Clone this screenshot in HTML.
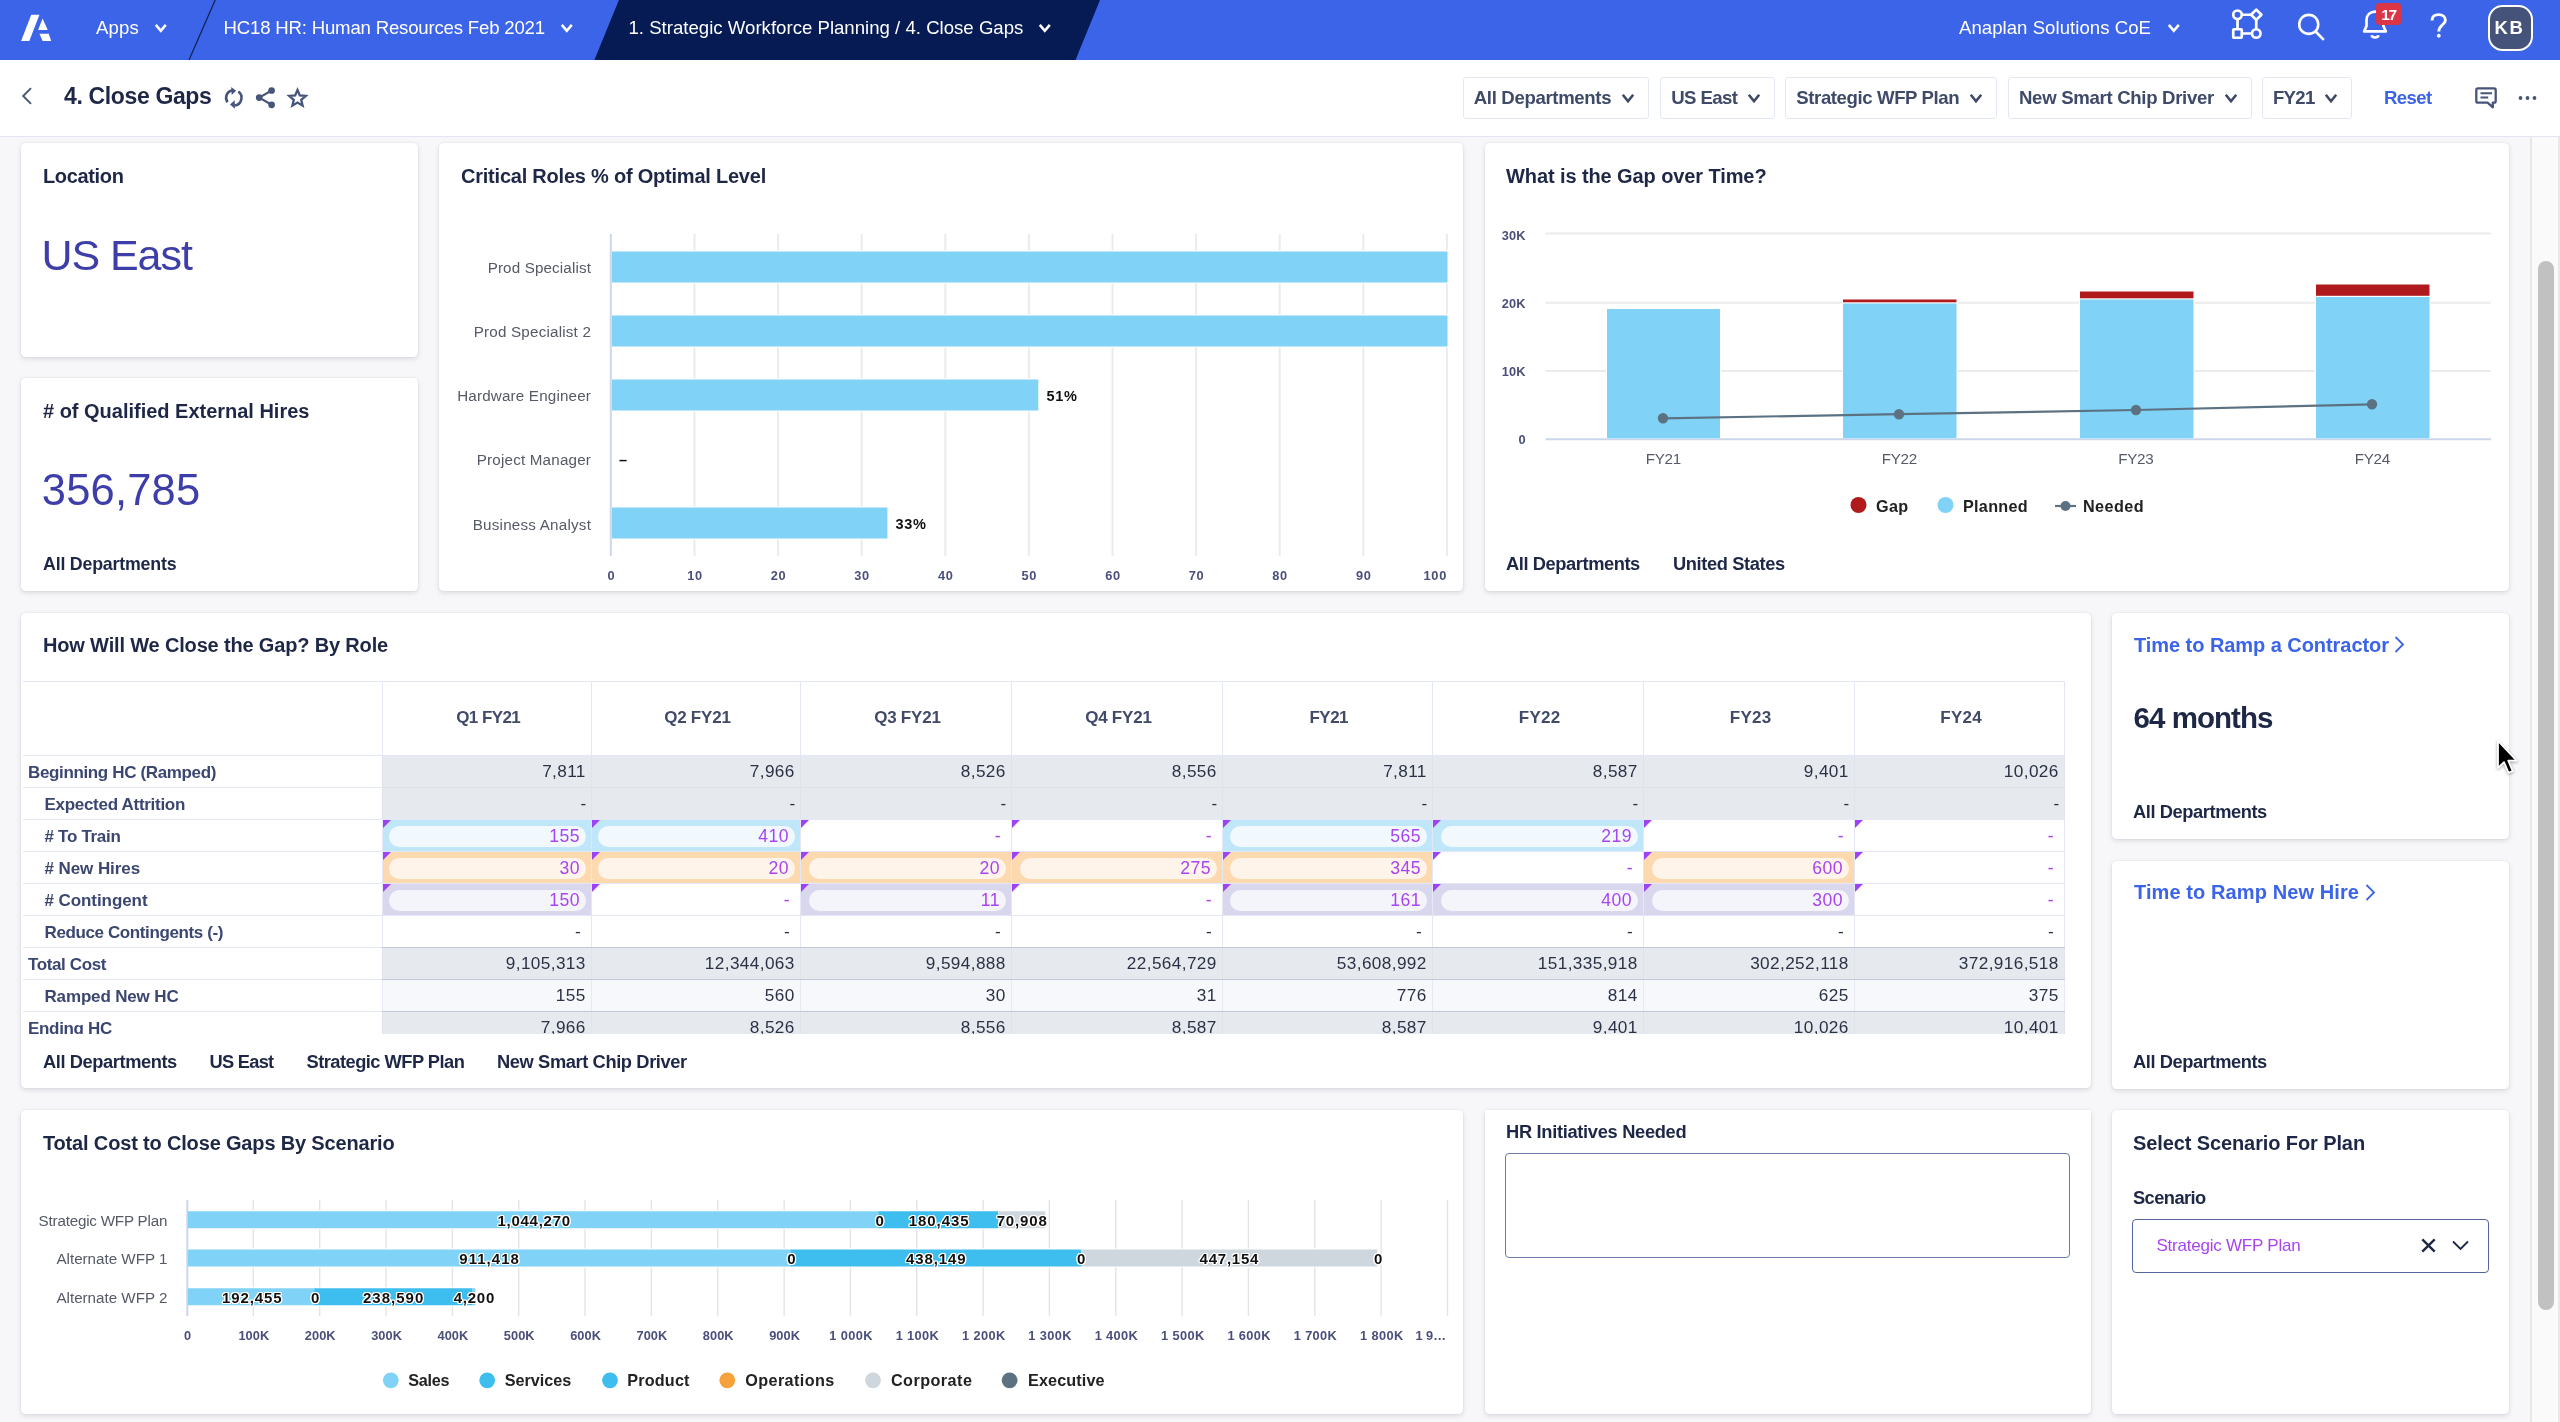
<!DOCTYPE html>
<html><head><meta charset="utf-8"><title>4. Close Gaps</title>
<style>
*{box-sizing:border-box;margin:0;padding:0}
html,body{width:2560px;height:1422px;overflow:hidden;background:#f7f7f9;font-family:"Liberation Sans",sans-serif;}
.a{position:absolute}
.t{position:absolute;white-space:nowrap}
.card{position:absolute;background:#fff;border-radius:4.5px;box-shadow:0 2px 5px rgba(30,40,80,.13),0 0 1.5px rgba(30,40,80,.14)}
svg{position:absolute;overflow:visible}
#wrap{position:absolute;left:0;top:0;width:2560px;height:1422px;will-change:transform}
</style></head><body><div id="wrap">

<div class="a" style="left:0px;top:0px;width:2560px;height:60px;background:#3c64e8;"></div>
<svg class="a" style="left:0;top:0" width="2560" height="60"><polygon points="618.9,0 1100,0 1075.5,60 594.4,60" fill="#061b53"/><line x1="215.2" y1="0" x2="189" y2="60" stroke="#10204f" stroke-width="1.2"/></svg>
<svg class="a" style="left:21px;top:15px" width="31" height="26" viewBox="0 0 31 26"><polygon points="10.25,-0.15 18.45,-0.15 8.3,25.9 0.1,25.9" fill="#fff"/><polygon points="21.6,3.6 26.7,15.1 17.1,15.1" fill="#fff"/><polygon points="18.45,18.75 27.8,18.75 30.2,25.9 21.6,25.9" fill="#fff"/></svg>
<div class="t" style="left:96.00px;top:17.00px;font-size:18.6px;line-height:21px;color:#fff;letter-spacing:0.151px;">Apps</div>
<svg class="a" style="left:155px;top:24px" width="11.6" height="7.8" viewBox="0 0 11.6 7.8"><path d="M0.8 0.8 L5.8 6.8 L10.799999999999999 0.8" fill="none" stroke="#fff" stroke-width="2.6" stroke-linecap="butt" stroke-linejoin="miter"/></svg>
<div class="t" style="left:223.50px;top:17.00px;font-size:18.6px;line-height:21px;color:#fff;letter-spacing:-0.188px;">HC18 HR: Human Resources Feb 2021</div>
<svg class="a" style="left:561px;top:24px" width="11.6" height="7.8" viewBox="0 0 11.6 7.8"><path d="M0.8 0.8 L5.8 6.8 L10.799999999999999 0.8" fill="none" stroke="#fff" stroke-width="2.6" stroke-linecap="butt" stroke-linejoin="miter"/></svg>
<div class="t" style="left:628.50px;top:17.00px;font-size:18.6px;line-height:21px;color:#fff;letter-spacing:0.009px;">1. Strategic Workforce Planning / 4. Close Gaps</div>
<svg class="a" style="left:1039px;top:24px" width="11.6" height="7.8" viewBox="0 0 11.6 7.8"><path d="M0.8 0.8 L5.8 6.8 L10.799999999999999 0.8" fill="none" stroke="#fff" stroke-width="2.6" stroke-linecap="butt" stroke-linejoin="miter"/></svg>
<div class="t" style="left:1959.00px;top:17.00px;font-size:18.6px;line-height:21px;color:#fff;letter-spacing:0.034px;">Anaplan Solutions CoE</div>
<svg class="a" style="left:2167.5px;top:24px" width="11.6" height="7.8" viewBox="0 0 11.6 7.8"><path d="M0.8 0.8 L5.8 6.8 L10.799999999999999 0.8" fill="none" stroke="#fff" stroke-width="2.6" stroke-linecap="butt" stroke-linejoin="miter"/></svg>
<svg class="a" style="left:2231px;top:8px" width="32" height="32" viewBox="0 0 32 32" fill="none" stroke="#fff" stroke-width="2.7"><circle cx="6.5" cy="6.75" r="4.25"/><rect x="2.25" y="21.25" width="8.5" height="8.5" rx="0.8"/><circle cx="25.25" cy="25.5" r="4.25"/><path d="M25.25 1.6 L30.4 6.75 L25.25 11.9 L20.1 6.75 Z" stroke-linejoin="round"/><path d="M10.8 6.75 H20.2 M6.5 11 V21.2 M10.8 25.5 H21 M25.25 11.9 V21.2"/></svg>
<svg class="a" style="left:2297px;top:13px" width="28" height="28" viewBox="0 0 28 28" fill="none" stroke="#fff" stroke-width="2.6"><circle cx="11.75" cy="11.4" r="9.5"/><path d="M18.6 18.5 L26.8 26.9" stroke-linecap="butt"/></svg>
<svg class="a" style="left:2361px;top:9px" width="28" height="32" viewBox="0 0 28 32" fill="none" stroke="#fff" stroke-width="2.7"><path d="M3.2 22.4 L5.5 17 V10.8 C5.5 5.8 9.2 2.7 14 2.7 C18.8 2.7 22.4 5.8 22.4 10.8 V17 L24.8 22.4 Z" stroke-linejoin="round"/><path d="M10.6 26.3 C11.3 29.2 16.8 29.2 17.5 26.3"/></svg>
<div class="a" style="left:2376px;top:3px;width:25px;height:22px;background:#dc3545;border-radius:3.5px"></div>
<div class="t" style="left:2381.30px;top:6.30px;font-size:15.5px;line-height:17px;color:#fff;font-weight:700;letter-spacing:-1.320px;">17</div>
<svg class="a" style="left:2429px;top:12px" width="20" height="28" viewBox="0 0 20 28" fill="none" stroke="#fff" stroke-width="2.9"><path d="M3 8.4 C3 4.4 6 2.6 9.6 2.6 C13.4 2.6 16.4 4.8 16.4 8.2 C16.4 12.8 9.8 13 9.8 19.6"/><circle cx="9.8" cy="23.7" r="1.5" fill="#fff" stroke-width="1"/></svg>
<div class="a" style="left:2487.5px;top:5px;width:45.5px;height:45.5px;background:#45537a;border:2.6px solid #fff;border-radius:14.5px"></div>
<div class="t" style="left:2494.62px;top:16.50px;font-size:18.5px;line-height:21px;color:#fff;font-weight:700;letter-spacing:1.640px;">KB</div>
<div class="a" style="left:0px;top:60px;width:2560px;height:76px;background:#fff;"></div>
<div class="a" style="left:0px;top:136px;width:2560px;height:1px;background:#e1e5f5;"></div>
<svg class="a" style="left:21px;top:87px" width="12" height="18" viewBox="0 0 12 18"><path d="M10 1.2 L2.2 9 L10 16.8" fill="none" stroke="#48557a" stroke-width="1.9"/></svg>
<div class="t" style="left:64.00px;top:83.30px;font-size:23px;line-height:26px;color:#1e2846;font-weight:700;letter-spacing:-0.355px;">4. Close Gaps</div>
<svg class="a" style="left:0;top:0" width="400" height="136"><path d="M227.49 102.22 A7.7 7.7 0 0 1 232.46 90.22 M238.33 91.57 A7.7 7.7 0 0 1 234.47 105.47" fill="none" stroke="#48557a" stroke-width="2.6"/><polygon points="231.2,86.9 236.1,90.8 231.7,95.1" fill="#48557a"/><polygon points="234.7,100.3 230,104.6 234.9,108.7" fill="#48557a"/><line x1="259.2" y1="97.6" x2="271.6" y2="90.5" stroke="#48557a" stroke-width="2.2"/><line x1="259.2" y1="97.6" x2="271.6" y2="104.8" stroke="#48557a" stroke-width="2.2"/><circle cx="271.6" cy="90.5" r="3.35" fill="#48557a"/><circle cx="259.2" cy="97.6" r="3.35" fill="#48557a"/><circle cx="271.6" cy="104.8" r="3.35" fill="#48557a"/><polygon points="297.50,89.90 299.79,95.44 305.77,95.91 301.21,99.81 302.61,105.64 297.50,102.50 292.39,105.64 293.79,99.81 289.23,95.91 295.21,95.44" fill="none" stroke="#48557a" stroke-width="2.3" stroke-linejoin="miter"/></svg>
<div class="a" style="left:1463px;top:77px;width:185.75px;height:41.75px;background:#fff;border:1.5px solid #e4e8f4;border-radius:3px"></div><div class="t" style="left:1473.75px;top:87.00px;font-size:18.6px;line-height:21px;color:#3e4a68;font-weight:700;letter-spacing:-0.342px;">All Departments</div><svg class="a" style="left:1621.75px;top:93.75px" width="12" height="8.25" viewBox="0 0 12 8.25"><path d="M0.8 0.8 L6.0 7.25 L11.2 0.8" fill="none" stroke="#3e4a68" stroke-width="2.6" stroke-linecap="butt" stroke-linejoin="miter"/></svg>
<div class="a" style="left:1660px;top:77px;width:115px;height:41.75px;background:#fff;border:1.5px solid #e4e8f4;border-radius:3px"></div><div class="t" style="left:1671.25px;top:87.00px;font-size:18.6px;line-height:21px;color:#3e4a68;font-weight:700;letter-spacing:-0.578px;">US East</div><svg class="a" style="left:1748px;top:93.75px" width="12" height="8.25" viewBox="0 0 12 8.25"><path d="M0.8 0.8 L6.0 7.25 L11.2 0.8" fill="none" stroke="#3e4a68" stroke-width="2.6" stroke-linecap="butt" stroke-linejoin="miter"/></svg>
<div class="a" style="left:1785px;top:77px;width:211.75px;height:41.75px;background:#fff;border:1.5px solid #e4e8f4;border-radius:3px"></div><div class="t" style="left:1796.25px;top:87.00px;font-size:18.6px;line-height:21px;color:#3e4a68;font-weight:700;letter-spacing:-0.400px;">Strategic WFP Plan</div><svg class="a" style="left:1969.75px;top:93.75px" width="12" height="8.25" viewBox="0 0 12 8.25"><path d="M0.8 0.8 L6.0 7.25 L11.2 0.8" fill="none" stroke="#3e4a68" stroke-width="2.6" stroke-linecap="butt" stroke-linejoin="miter"/></svg>
<div class="a" style="left:2008px;top:77px;width:243.75px;height:41.75px;background:#fff;border:1.5px solid #e4e8f4;border-radius:3px"></div><div class="t" style="left:2019.00px;top:87.00px;font-size:18.6px;line-height:21px;color:#3e4a68;font-weight:700;letter-spacing:-0.312px;">New Smart Chip Driver</div><svg class="a" style="left:2224.75px;top:93.75px" width="12" height="8.25" viewBox="0 0 12 8.25"><path d="M0.8 0.8 L6.0 7.25 L11.2 0.8" fill="none" stroke="#3e4a68" stroke-width="2.6" stroke-linecap="butt" stroke-linejoin="miter"/></svg>
<div class="a" style="left:2262px;top:77px;width:89.75px;height:41.75px;background:#fff;border:1.5px solid #e4e8f4;border-radius:3px"></div><div class="t" style="left:2273.00px;top:87.00px;font-size:18.6px;line-height:21px;color:#3e4a68;font-weight:700;letter-spacing:-0.739px;">FY21</div><svg class="a" style="left:2324.75px;top:93.75px" width="12" height="8.25" viewBox="0 0 12 8.25"><path d="M0.8 0.8 L6.0 7.25 L11.2 0.8" fill="none" stroke="#3e4a68" stroke-width="2.6" stroke-linecap="butt" stroke-linejoin="miter"/></svg>
<div class="t" style="left:2384.00px;top:87.00px;font-size:18.6px;line-height:21px;color:#3c64e8;font-weight:700;letter-spacing:-0.632px;">Reset</div>
<svg class="a" style="left:2475px;top:87px" width="22" height="22" viewBox="0 0 22 22" fill="none" stroke="#48557a" stroke-width="2.3"><path d="M3 1.3 H19 Q20.7 1.3 20.7 3 V14 Q20.7 15.7 19 15.7 H17.8 V20.3 L12.6 15.7 H3 Q1.3 15.7 1.3 14 V3 Q1.3 1.3 3 1.3 Z" stroke-linejoin="round"/><path d="M5.5 6.3 H17 M5.5 10.6 H13.2" stroke-width="2"/></svg>
<svg class="a" style="left:2518px;top:95px" width="20" height="6"><circle cx="2.500" cy="3" r="1.900" fill="#48557a"/><circle cx="9.500" cy="3" r="1.900" fill="#48557a"/><circle cx="16.500" cy="3" r="1.900" fill="#48557a"/></svg>
<div class="a" style="left:2530px;top:137px;width:2px;height:1285px;background:#e8e8e9;"></div>
<div class="a" style="left:2532px;top:137px;width:26px;height:1285px;background:#fafafa;"></div>
<div class="a" style="left:2558px;top:137px;width:2px;height:1285px;background:#e8e8e9;"></div>
<div class="a" style="left:2538px;top:261px;width:16px;height:1048.5px;background:#c1c1c1;border-radius:8px"></div>
<div class="card" style="left:21px;top:143px;width:397px;height:214px"></div>
<div class="t" style="left:43.00px;top:165.20px;font-size:20px;line-height:22px;color:#1e2846;font-weight:700;letter-spacing:-0.354px;">Location</div>
<div class="t" style="left:41.40px;top:231.00px;font-size:43px;line-height:48px;color:#3d3eaa;letter-spacing:-1.032px;">US East</div>
<div class="card" style="left:21px;top:378px;width:397px;height:212.5px"></div>
<div class="t" style="left:43.00px;top:400.20px;font-size:20px;line-height:22px;color:#1e2846;font-weight:700;letter-spacing:-0.012px;"># of Qualified External Hires</div>
<div class="t" style="left:41.80px;top:465.80px;font-size:43.5px;line-height:48px;color:#3d3eaa;letter-spacing:0.180px;">356,785</div>
<div class="t" style="left:43.00px;top:554.20px;font-size:17.8px;line-height:20px;color:#1e2846;font-weight:700;letter-spacing:-0.200px;">All Departments</div>
<div class="card" style="left:439px;top:143px;width:1024px;height:447.5px"></div>
<div class="t" style="left:461.00px;top:164.50px;font-size:20px;line-height:22px;color:#1e2846;font-weight:700;letter-spacing:-0.221px;">Critical Roles % of Optimal Level</div>
<svg class="a" style="left:0;top:0" width="2560" height="1422"><line x1="694.5" y1="234" x2="694.5" y2="556" stroke="#ebebec" stroke-width="2"/><line x1="778.1" y1="234" x2="778.1" y2="556" stroke="#ebebec" stroke-width="2"/><line x1="861.7" y1="234" x2="861.7" y2="556" stroke="#ebebec" stroke-width="2"/><line x1="945.3" y1="234" x2="945.3" y2="556" stroke="#ebebec" stroke-width="2"/><line x1="1028.9" y1="234" x2="1028.9" y2="556" stroke="#ebebec" stroke-width="2"/><line x1="1112.5" y1="234" x2="1112.5" y2="556" stroke="#ebebec" stroke-width="2"/><line x1="1196.1" y1="234" x2="1196.1" y2="556" stroke="#ebebec" stroke-width="2"/><line x1="1279.7" y1="234" x2="1279.7" y2="556" stroke="#ebebec" stroke-width="2"/><line x1="1363.3" y1="234" x2="1363.3" y2="556" stroke="#ebebec" stroke-width="2"/><line x1="1446.9" y1="234" x2="1446.9" y2="556" stroke="#ebebec" stroke-width="2"/><line x1="610.8" y1="234" x2="610.8" y2="556" stroke="#ccd6eb" stroke-width="2"/><rect x="611.8" y="250.5" width="836.7" height="33" fill="#fff"/><rect x="611.8" y="251.5" width="835.7" height="31" fill="#80d3f6"/><rect x="611.8" y="314.5" width="836.7" height="33" fill="#fff"/><rect x="611.8" y="315.5" width="835.7" height="31" fill="#80d3f6"/><rect x="611.8" y="378.5" width="427.5" height="33" fill="#fff"/><rect x="611.8" y="379.5" width="426.5" height="31" fill="#80d3f6"/><rect x="611.8" y="506.5" width="276.6" height="33" fill="#fff"/><rect x="611.8" y="507.5" width="275.6" height="31" fill="#80d3f6"/></svg>
<div class="t" style="left:487.64px;top:259.00px;font-size:15.2px;line-height:17px;color:#555a66;letter-spacing:0.141px;">Prod Specialist</div>
<div class="t" style="left:473.70px;top:323.00px;font-size:15.2px;line-height:17px;color:#555a66;letter-spacing:0.202px;">Prod Specialist 2</div>
<div class="t" style="left:457.18px;top:387.00px;font-size:15.2px;line-height:17px;color:#555a66;letter-spacing:0.179px;">Hardware Engineer</div>
<div class="t" style="left:476.70px;top:451.00px;font-size:15.2px;line-height:17px;color:#555a66;letter-spacing:0.199px;">Project Manager</div>
<div class="t" style="left:472.72px;top:515.50px;font-size:15.2px;line-height:17px;color:#555a66;letter-spacing:0.225px;">Business Analyst</div>
<div class="t" style="left:1046.50px;top:388.00px;font-size:14.5px;line-height:16px;color:#111;font-weight:700;letter-spacing:0.660px;">51%</div>
<div class="t" style="left:895.50px;top:516.00px;font-size:14.5px;line-height:16px;color:#111;font-weight:700;letter-spacing:0.660px;">33%</div>
<div class="t" style="left:619.00px;top:451.50px;font-size:14.5px;line-height:16px;color:#111;font-weight:700;">–</div>
<div class="t" style="left:607.44px;top:568.00px;font-size:12.8px;line-height:15px;color:#4b4f7c;font-weight:700;">0</div>
<div class="t" style="left:687.17px;top:568.00px;font-size:12.8px;line-height:15px;color:#4b4f7c;font-weight:700;letter-spacing:0.631px;">10</div>
<div class="t" style="left:770.77px;top:568.00px;font-size:12.8px;line-height:15px;color:#4b4f7c;font-weight:700;letter-spacing:0.631px;">20</div>
<div class="t" style="left:854.37px;top:568.00px;font-size:12.8px;line-height:15px;color:#4b4f7c;font-weight:700;letter-spacing:0.631px;">30</div>
<div class="t" style="left:937.97px;top:568.00px;font-size:12.8px;line-height:15px;color:#4b4f7c;font-weight:700;letter-spacing:0.631px;">40</div>
<div class="t" style="left:1021.57px;top:568.00px;font-size:12.8px;line-height:15px;color:#4b4f7c;font-weight:700;letter-spacing:0.631px;">50</div>
<div class="t" style="left:1105.17px;top:568.00px;font-size:12.8px;line-height:15px;color:#4b4f7c;font-weight:700;letter-spacing:0.631px;">60</div>
<div class="t" style="left:1188.77px;top:568.00px;font-size:12.8px;line-height:15px;color:#4b4f7c;font-weight:700;letter-spacing:0.631px;">70</div>
<div class="t" style="left:1272.37px;top:568.00px;font-size:12.8px;line-height:15px;color:#4b4f7c;font-weight:700;letter-spacing:0.631px;">80</div>
<div class="t" style="left:1355.97px;top:568.00px;font-size:12.8px;line-height:15px;color:#4b4f7c;font-weight:700;letter-spacing:0.631px;">90</div>
<div class="t" style="left:1423.38px;top:568.00px;font-size:12.8px;line-height:15px;color:#4b4f7c;font-weight:700;letter-spacing:0.881px;">100</div>
<div class="card" style="left:1485px;top:143px;width:1024px;height:447.5px"></div>
<div class="t" style="left:1506.00px;top:164.50px;font-size:20px;line-height:22px;color:#1e2846;font-weight:700;letter-spacing:-0.097px;">What is the Gap over Time?</div>
<svg class="a" style="left:0;top:0" width="2560" height="1422"><line x1="1545.5" y1="233.5" x2="2491" y2="233.5" stroke="#ebebec" stroke-width="2"/><line x1="1545.5" y1="302.7" x2="2491" y2="302.7" stroke="#ebebec" stroke-width="2"/><line x1="1545.5" y1="371" x2="2491" y2="371" stroke="#ebebec" stroke-width="2"/><line x1="1545.5" y1="439.2" x2="2491" y2="439.2" stroke="#ccd6eb" stroke-width="2"/><rect x="1606" y="308" width="115" height="130.3" fill="#fff"/><rect x="1607" y="309" width="113" height="129.3" fill="#80d3f6"/><rect x="1842" y="298.5" width="115.5" height="139.8" fill="#fff"/><rect x="1843" y="303.5" width="113.5" height="134.8" fill="#80d3f6"/><rect x="1843" y="299.5" width="113.5" height="2.8" fill="#b01a1d"/><rect x="2079" y="290.5" width="115.5" height="147.8" fill="#fff"/><rect x="2080" y="299.5" width="113.5" height="138.8" fill="#80d3f6"/><rect x="2080" y="291.5" width="113.5" height="6.8" fill="#b01a1d"/><rect x="2315" y="283.5" width="115.5" height="154.8" fill="#fff"/><rect x="2316" y="297" width="113.5" height="141.3" fill="#80d3f6"/><rect x="2316" y="284.5" width="113.5" height="11.3" fill="#b01a1d"/><polyline points="1663,418.3 1899,414.2 2136,410 2372,404.3" fill="none" stroke="#5c7283" stroke-width="2.2"/><circle cx="1663" cy="418.3" r="5.200" fill="#5c7283"/><circle cx="1899" cy="414.2" r="5.200" fill="#5c7283"/><circle cx="2136" cy="410" r="5.200" fill="#5c7283"/><circle cx="2372" cy="404.3" r="5.200" fill="#5c7283"/><circle cx="1858.500" cy="505" r="8" fill="#b01a1d"/><circle cx="1945.500" cy="505" r="8" fill="#80d3f6"/><line x1="2055" y1="506" x2="2076" y2="506" stroke="#5c7283" stroke-width="2.2"/><circle cx="2065.500" cy="506" r="5" fill="#5c7283"/></svg>
<div class="t" style="left:1501.67px;top:228.00px;font-size:12.8px;line-height:15px;color:#4b4f7c;font-weight:700;letter-spacing:0.173px;">30K</div>
<div class="t" style="left:1501.67px;top:296.00px;font-size:12.8px;line-height:15px;color:#4b4f7c;font-weight:700;letter-spacing:0.173px;">20K</div>
<div class="t" style="left:1501.67px;top:364.00px;font-size:12.8px;line-height:15px;color:#4b4f7c;font-weight:700;letter-spacing:0.173px;">10K</div>
<div class="t" style="left:1518.38px;top:432.00px;font-size:12.8px;line-height:15px;color:#4b4f7c;font-weight:700;">0</div>
<div class="t" style="left:1645.83px;top:450.00px;font-size:15.2px;line-height:17px;color:#555a66;letter-spacing:-0.333px;">FY21</div>
<div class="t" style="left:1881.83px;top:450.00px;font-size:15.2px;line-height:17px;color:#555a66;letter-spacing:-0.333px;">FY22</div>
<div class="t" style="left:2118.33px;top:450.00px;font-size:15.2px;line-height:17px;color:#555a66;letter-spacing:-0.333px;">FY23</div>
<div class="t" style="left:2354.83px;top:450.00px;font-size:15.2px;line-height:17px;color:#555a66;letter-spacing:-0.333px;">FY24</div>
<div class="t" style="left:1876.00px;top:497.00px;font-size:16.2px;line-height:18px;color:#222;font-weight:700;letter-spacing:0.331px;">Gap</div>
<div class="t" style="left:1963.00px;top:497.00px;font-size:16.2px;line-height:18px;color:#222;font-weight:700;letter-spacing:0.284px;">Planned</div>
<div class="t" style="left:2083.00px;top:497.00px;font-size:16.2px;line-height:18px;color:#222;font-weight:700;letter-spacing:0.413px;">Needed</div>
<div class="t" style="left:1506.00px;top:553.00px;font-size:18.3px;line-height:21px;color:#1e2846;font-weight:700;letter-spacing:-0.422px;">All Departments</div>
<div class="t" style="left:1673.00px;top:553.00px;font-size:18.3px;line-height:21px;color:#1e2846;font-weight:700;letter-spacing:-0.380px;">United States</div>
<div class="card" style="left:21px;top:613px;width:2070px;height:475px"></div>
<div class="t" style="left:43.00px;top:634.00px;font-size:20px;line-height:22px;color:#1e2846;font-weight:700;letter-spacing:-0.165px;">How Will We Close the Gap? By Role</div>
<div class="a" style="left:0;top:0;width:2560px;height:1034px;overflow:hidden">
<div class="a" style="left:383px;top:756px;width:1681px;height:31px;background:#e6eaee;"></div>
<div class="a" style="left:383px;top:788px;width:1681px;height:31px;background:#e6eaee;"></div>
<div class="a" style="left:383px;top:948px;width:1681px;height:31px;background:#e6eaee;"></div>
<div class="a" style="left:383px;top:980px;width:1681px;height:31px;background:#f7f8fc;"></div>
<div class="a" style="left:383px;top:1012px;width:1681px;height:31px;background:#e6eaee;"></div>
<div class="a" style="left:23px;top:681px;width:2042px;height:1px;background:#e4e7f5;"></div>
<div class="a" style="left:23px;top:755px;width:359px;height:1px;background:#e4e7f5;"></div>
<div class="a" style="left:382px;top:755px;width:1683px;height:1px;background:#e4e7f5;"></div>
<div class="a" style="left:23px;top:787px;width:359px;height:1px;background:#e4e7f5;"></div>
<div class="a" style="left:382px;top:787px;width:1683px;height:1px;background:#dde2ea;"></div>
<div class="a" style="left:23px;top:819px;width:359px;height:1px;background:#e4e7f5;"></div>
<div class="a" style="left:382px;top:819px;width:1683px;height:1px;background:#e4e7f5;"></div>
<div class="a" style="left:23px;top:851px;width:359px;height:1px;background:#e4e7f5;"></div>
<div class="a" style="left:382px;top:851px;width:1683px;height:1px;background:#e4e7f5;"></div>
<div class="a" style="left:23px;top:883px;width:359px;height:1px;background:#e4e7f5;"></div>
<div class="a" style="left:382px;top:883px;width:1683px;height:1px;background:#e4e7f5;"></div>
<div class="a" style="left:23px;top:915px;width:359px;height:1px;background:#e4e7f5;"></div>
<div class="a" style="left:382px;top:915px;width:1683px;height:1px;background:#e4e7f5;"></div>
<div class="a" style="left:23px;top:947px;width:359px;height:1px;background:#e4e7f5;"></div>
<div class="a" style="left:382px;top:947px;width:1683px;height:1px;background:#c3c8d6;"></div>
<div class="a" style="left:23px;top:979px;width:359px;height:1px;background:#e4e7f5;"></div>
<div class="a" style="left:382px;top:979px;width:1683px;height:1px;background:#c3c8d6;"></div>
<div class="a" style="left:23px;top:1011px;width:359px;height:1px;background:#e4e7f5;"></div>
<div class="a" style="left:382px;top:1011px;width:1683px;height:1px;background:#c3c8d6;"></div>
<div class="a" style="left:382px;top:681px;width:1px;height:74px;background:#e4e7f5;"></div>
<div class="a" style="left:382px;top:756px;width:1px;height:63px;background:#dfe3ea;"></div>
<div class="a" style="left:382px;top:819px;width:1px;height:128px;background:#e4e7f5;"></div>
<div class="a" style="left:382px;top:948px;width:1px;height:31px;background:#dfe3ea;"></div>
<div class="a" style="left:382px;top:980px;width:1px;height:31px;background:#e8eaf3;"></div>
<div class="a" style="left:382px;top:1012px;width:1px;height:31px;background:#dfe3ea;"></div>
<div class="a" style="left:591px;top:681px;width:1px;height:74px;background:#e4e7f5;"></div>
<div class="a" style="left:591px;top:756px;width:1px;height:63px;background:#dfe3ea;"></div>
<div class="a" style="left:591px;top:819px;width:1px;height:128px;background:#e4e7f5;"></div>
<div class="a" style="left:591px;top:948px;width:1px;height:31px;background:#dfe3ea;"></div>
<div class="a" style="left:591px;top:980px;width:1px;height:31px;background:#e8eaf3;"></div>
<div class="a" style="left:591px;top:1012px;width:1px;height:31px;background:#dfe3ea;"></div>
<div class="a" style="left:800px;top:681px;width:1px;height:74px;background:#e4e7f5;"></div>
<div class="a" style="left:800px;top:756px;width:1px;height:63px;background:#dfe3ea;"></div>
<div class="a" style="left:800px;top:819px;width:1px;height:128px;background:#e4e7f5;"></div>
<div class="a" style="left:800px;top:948px;width:1px;height:31px;background:#dfe3ea;"></div>
<div class="a" style="left:800px;top:980px;width:1px;height:31px;background:#e8eaf3;"></div>
<div class="a" style="left:800px;top:1012px;width:1px;height:31px;background:#dfe3ea;"></div>
<div class="a" style="left:1011px;top:681px;width:1px;height:74px;background:#e4e7f5;"></div>
<div class="a" style="left:1011px;top:756px;width:1px;height:63px;background:#dfe3ea;"></div>
<div class="a" style="left:1011px;top:819px;width:1px;height:128px;background:#e4e7f5;"></div>
<div class="a" style="left:1011px;top:948px;width:1px;height:31px;background:#dfe3ea;"></div>
<div class="a" style="left:1011px;top:980px;width:1px;height:31px;background:#e8eaf3;"></div>
<div class="a" style="left:1011px;top:1012px;width:1px;height:31px;background:#dfe3ea;"></div>
<div class="a" style="left:1222px;top:681px;width:1px;height:74px;background:#e4e7f5;"></div>
<div class="a" style="left:1222px;top:756px;width:1px;height:63px;background:#dfe3ea;"></div>
<div class="a" style="left:1222px;top:819px;width:1px;height:128px;background:#e4e7f5;"></div>
<div class="a" style="left:1222px;top:948px;width:1px;height:31px;background:#dfe3ea;"></div>
<div class="a" style="left:1222px;top:980px;width:1px;height:31px;background:#e8eaf3;"></div>
<div class="a" style="left:1222px;top:1012px;width:1px;height:31px;background:#dfe3ea;"></div>
<div class="a" style="left:1432px;top:681px;width:1px;height:74px;background:#e4e7f5;"></div>
<div class="a" style="left:1432px;top:756px;width:1px;height:63px;background:#dfe3ea;"></div>
<div class="a" style="left:1432px;top:819px;width:1px;height:128px;background:#e4e7f5;"></div>
<div class="a" style="left:1432px;top:948px;width:1px;height:31px;background:#dfe3ea;"></div>
<div class="a" style="left:1432px;top:980px;width:1px;height:31px;background:#e8eaf3;"></div>
<div class="a" style="left:1432px;top:1012px;width:1px;height:31px;background:#dfe3ea;"></div>
<div class="a" style="left:1643px;top:681px;width:1px;height:74px;background:#e4e7f5;"></div>
<div class="a" style="left:1643px;top:756px;width:1px;height:63px;background:#dfe3ea;"></div>
<div class="a" style="left:1643px;top:819px;width:1px;height:128px;background:#e4e7f5;"></div>
<div class="a" style="left:1643px;top:948px;width:1px;height:31px;background:#dfe3ea;"></div>
<div class="a" style="left:1643px;top:980px;width:1px;height:31px;background:#e8eaf3;"></div>
<div class="a" style="left:1643px;top:1012px;width:1px;height:31px;background:#dfe3ea;"></div>
<div class="a" style="left:1854px;top:681px;width:1px;height:74px;background:#e4e7f5;"></div>
<div class="a" style="left:1854px;top:756px;width:1px;height:63px;background:#dfe3ea;"></div>
<div class="a" style="left:1854px;top:819px;width:1px;height:128px;background:#e4e7f5;"></div>
<div class="a" style="left:1854px;top:948px;width:1px;height:31px;background:#dfe3ea;"></div>
<div class="a" style="left:1854px;top:980px;width:1px;height:31px;background:#e8eaf3;"></div>
<div class="a" style="left:1854px;top:1012px;width:1px;height:31px;background:#dfe3ea;"></div>
<div class="a" style="left:2064px;top:681px;width:1px;height:74px;background:#e4e7f5;"></div>
<div class="a" style="left:2064px;top:756px;width:1px;height:63px;background:#dfe3ea;"></div>
<div class="a" style="left:2064px;top:819px;width:1px;height:128px;background:#e4e7f5;"></div>
<div class="a" style="left:2064px;top:948px;width:1px;height:31px;background:#dfe3ea;"></div>
<div class="a" style="left:2064px;top:980px;width:1px;height:31px;background:#e8eaf3;"></div>
<div class="a" style="left:2064px;top:1012px;width:1px;height:31px;background:#dfe3ea;"></div>
<div class="t" style="left:456.21px;top:708.00px;font-size:17px;line-height:19px;color:#414b68;font-weight:700;letter-spacing:-0.576px;">Q1 FY21</div>
<div class="t" style="left:664.14px;top:708.00px;font-size:17px;line-height:19px;color:#414b68;font-weight:700;letter-spacing:-0.219px;">Q2 FY21</div>
<div class="t" style="left:874.14px;top:708.00px;font-size:17px;line-height:19px;color:#414b68;font-weight:700;letter-spacing:-0.219px;">Q3 FY21</div>
<div class="t" style="left:1085.14px;top:708.00px;font-size:17px;line-height:19px;color:#414b68;font-weight:700;letter-spacing:-0.219px;">Q4 FY21</div>
<div class="t" style="left:1309.48px;top:708.00px;font-size:17px;line-height:19px;color:#414b68;font-weight:700;letter-spacing:-0.533px;">FY21</div>
<div class="t" style="left:1518.86px;top:708.00px;font-size:17px;line-height:19px;color:#414b68;font-weight:700;letter-spacing:0.217px;">FY22</div>
<div class="t" style="left:1729.86px;top:708.00px;font-size:17px;line-height:19px;color:#414b68;font-weight:700;letter-spacing:0.217px;">FY23</div>
<div class="t" style="left:1940.36px;top:708.00px;font-size:17px;line-height:19px;color:#414b68;font-weight:700;letter-spacing:0.217px;">FY24</div>
<div class="t" style="left:28.00px;top:763.00px;font-size:17px;line-height:19px;color:#3b4770;font-weight:700;letter-spacing:-0.357px;">Beginning HC (Ramped)</div>
<div class="t" style="left:542.13px;top:760.60px;font-size:17.2px;line-height:20px;color:#2b3246;letter-spacing:0.376px;">7,811</div>
<div class="t" style="left:749.81px;top:760.60px;font-size:17.2px;line-height:20px;color:#2b3246;letter-spacing:0.387px;">7,966</div>
<div class="t" style="left:960.81px;top:760.60px;font-size:17.2px;line-height:20px;color:#2b3246;letter-spacing:0.387px;">8,526</div>
<div class="t" style="left:1171.81px;top:760.60px;font-size:17.2px;line-height:20px;color:#2b3246;letter-spacing:0.387px;">8,556</div>
<div class="t" style="left:1383.13px;top:760.60px;font-size:17.2px;line-height:20px;color:#2b3246;letter-spacing:0.376px;">7,811</div>
<div class="t" style="left:1592.81px;top:760.60px;font-size:17.2px;line-height:20px;color:#2b3246;letter-spacing:0.387px;">8,587</div>
<div class="t" style="left:1803.81px;top:760.60px;font-size:17.2px;line-height:20px;color:#2b3246;letter-spacing:0.387px;">9,401</div>
<div class="t" style="left:2003.82px;top:760.60px;font-size:17.2px;line-height:20px;color:#2b3246;letter-spacing:0.395px;">10,026</div>
<div class="t" style="left:44.50px;top:795.00px;font-size:17px;line-height:19px;color:#3b4770;font-weight:700;letter-spacing:-0.293px;">Expected Attrition</div>
<div class="t" style="left:580.47px;top:792.60px;font-size:17.2px;line-height:20px;color:#2b3246;">-</div>
<div class="t" style="left:789.47px;top:792.60px;font-size:17.2px;line-height:20px;color:#2b3246;">-</div>
<div class="t" style="left:1000.47px;top:792.60px;font-size:17.2px;line-height:20px;color:#2b3246;">-</div>
<div class="t" style="left:1211.47px;top:792.60px;font-size:17.2px;line-height:20px;color:#2b3246;">-</div>
<div class="t" style="left:1421.47px;top:792.60px;font-size:17.2px;line-height:20px;color:#2b3246;">-</div>
<div class="t" style="left:1632.47px;top:792.60px;font-size:17.2px;line-height:20px;color:#2b3246;">-</div>
<div class="t" style="left:1843.47px;top:792.60px;font-size:17.2px;line-height:20px;color:#2b3246;">-</div>
<div class="t" style="left:2053.47px;top:792.60px;font-size:17.2px;line-height:20px;color:#2b3246;">-</div>
<div class="t" style="left:44.50px;top:827.00px;font-size:17px;line-height:19px;color:#3b4770;font-weight:700;letter-spacing:-0.303px;"># To Train</div>
<div class="a" style="left:383px;top:820px;width:208px;height:31px;background:#bfe7f9;"></div>
<div class="a" style="left:388.5px;top:826px;width:197.5px;height:21px;background:#f1f9fe;border-radius:10.5px"></div>
<svg class="a" style="left:383px;top:820px" width="8" height="8"><polygon points="0,0 8,0 0,8" fill="#9d42f5"/></svg>
<div class="t" style="left:549.35px;top:826.10px;font-size:17.6px;line-height:20px;color:#a845f0;letter-spacing:0.392px;">155</div>
<div class="a" style="left:592px;top:820px;width:208px;height:31px;background:#bfe7f9;"></div>
<div class="a" style="left:597.5px;top:826px;width:197.5px;height:21px;background:#f1f9fe;border-radius:10.5px"></div>
<svg class="a" style="left:592px;top:820px" width="8" height="8"><polygon points="0,0 8,0 0,8" fill="#9d42f5"/></svg>
<div class="t" style="left:758.35px;top:826.10px;font-size:17.6px;line-height:20px;color:#a845f0;letter-spacing:0.392px;">410</div>
<svg class="a" style="left:801px;top:820px" width="8" height="8"><polygon points="0,0 8,0 0,8" fill="#9d42f5"/></svg>
<div class="t" style="left:994.84px;top:826.10px;font-size:17.6px;line-height:20px;color:#a845f0;">-</div>
<svg class="a" style="left:1012px;top:820px" width="8" height="8"><polygon points="0,0 8,0 0,8" fill="#9d42f5"/></svg>
<div class="t" style="left:1205.84px;top:826.10px;font-size:17.6px;line-height:20px;color:#a845f0;">-</div>
<div class="a" style="left:1223px;top:820px;width:209px;height:31px;background:#bfe7f9;"></div>
<div class="a" style="left:1229.5px;top:826px;width:197.5px;height:21px;background:#f1f9fe;border-radius:10.5px"></div>
<svg class="a" style="left:1223px;top:820px" width="8" height="8"><polygon points="0,0 8,0 0,8" fill="#9d42f5"/></svg>
<div class="t" style="left:1390.35px;top:826.10px;font-size:17.6px;line-height:20px;color:#a845f0;letter-spacing:0.392px;">565</div>
<div class="a" style="left:1433px;top:820px;width:210px;height:31px;background:#bfe7f9;"></div>
<div class="a" style="left:1440.5px;top:826px;width:197.5px;height:21px;background:#f1f9fe;border-radius:10.5px"></div>
<svg class="a" style="left:1433px;top:820px" width="8" height="8"><polygon points="0,0 8,0 0,8" fill="#9d42f5"/></svg>
<div class="t" style="left:1601.35px;top:826.10px;font-size:17.6px;line-height:20px;color:#a845f0;letter-spacing:0.392px;">219</div>
<svg class="a" style="left:1644px;top:820px" width="8" height="8"><polygon points="0,0 8,0 0,8" fill="#9d42f5"/></svg>
<div class="t" style="left:1837.84px;top:826.10px;font-size:17.6px;line-height:20px;color:#a845f0;">-</div>
<svg class="a" style="left:1855px;top:820px" width="8" height="8"><polygon points="0,0 8,0 0,8" fill="#9d42f5"/></svg>
<div class="t" style="left:2047.84px;top:826.10px;font-size:17.6px;line-height:20px;color:#a845f0;">-</div>
<div class="t" style="left:44.50px;top:859.00px;font-size:17px;line-height:19px;color:#3b4770;font-weight:700;letter-spacing:-0.080px;"># New Hires</div>
<div class="a" style="left:383px;top:852px;width:208px;height:31px;background:#fdd9b0;"></div>
<div class="a" style="left:388.5px;top:858px;width:197.5px;height:21px;background:#fff4ea;border-radius:10.5px"></div>
<svg class="a" style="left:383px;top:852px" width="8" height="8"><polygon points="0,0 8,0 0,8" fill="#9d42f5"/></svg>
<div class="t" style="left:559.53px;top:858.10px;font-size:17.6px;line-height:20px;color:#a845f0;letter-spacing:0.392px;">30</div>
<div class="a" style="left:592px;top:852px;width:208px;height:31px;background:#fdd9b0;"></div>
<div class="a" style="left:597.5px;top:858px;width:197.5px;height:21px;background:#fff4ea;border-radius:10.5px"></div>
<svg class="a" style="left:592px;top:852px" width="8" height="8"><polygon points="0,0 8,0 0,8" fill="#9d42f5"/></svg>
<div class="t" style="left:768.53px;top:858.10px;font-size:17.6px;line-height:20px;color:#a845f0;letter-spacing:0.392px;">20</div>
<div class="a" style="left:801px;top:852px;width:210px;height:31px;background:#fdd9b0;"></div>
<div class="a" style="left:808.5px;top:858px;width:197.5px;height:21px;background:#fff4ea;border-radius:10.5px"></div>
<svg class="a" style="left:801px;top:852px" width="8" height="8"><polygon points="0,0 8,0 0,8" fill="#9d42f5"/></svg>
<div class="t" style="left:979.53px;top:858.10px;font-size:17.6px;line-height:20px;color:#a845f0;letter-spacing:0.392px;">20</div>
<div class="a" style="left:1012px;top:852px;width:210px;height:31px;background:#fdd9b0;"></div>
<div class="a" style="left:1019.5px;top:858px;width:197.5px;height:21px;background:#fff4ea;border-radius:10.5px"></div>
<svg class="a" style="left:1012px;top:852px" width="8" height="8"><polygon points="0,0 8,0 0,8" fill="#9d42f5"/></svg>
<div class="t" style="left:1180.35px;top:858.10px;font-size:17.6px;line-height:20px;color:#a845f0;letter-spacing:0.392px;">275</div>
<div class="a" style="left:1223px;top:852px;width:209px;height:31px;background:#fdd9b0;"></div>
<div class="a" style="left:1229.5px;top:858px;width:197.5px;height:21px;background:#fff4ea;border-radius:10.5px"></div>
<svg class="a" style="left:1223px;top:852px" width="8" height="8"><polygon points="0,0 8,0 0,8" fill="#9d42f5"/></svg>
<div class="t" style="left:1390.35px;top:858.10px;font-size:17.6px;line-height:20px;color:#a845f0;letter-spacing:0.392px;">345</div>
<svg class="a" style="left:1433px;top:852px" width="8" height="8"><polygon points="0,0 8,0 0,8" fill="#9d42f5"/></svg>
<div class="t" style="left:1626.84px;top:858.10px;font-size:17.6px;line-height:20px;color:#a845f0;">-</div>
<div class="a" style="left:1644px;top:852px;width:210px;height:31px;background:#fdd9b0;"></div>
<div class="a" style="left:1651.5px;top:858px;width:197.5px;height:21px;background:#fff4ea;border-radius:10.5px"></div>
<svg class="a" style="left:1644px;top:852px" width="8" height="8"><polygon points="0,0 8,0 0,8" fill="#9d42f5"/></svg>
<div class="t" style="left:1812.35px;top:858.10px;font-size:17.6px;line-height:20px;color:#a845f0;letter-spacing:0.392px;">600</div>
<svg class="a" style="left:1855px;top:852px" width="8" height="8"><polygon points="0,0 8,0 0,8" fill="#9d42f5"/></svg>
<div class="t" style="left:2047.84px;top:858.10px;font-size:17.6px;line-height:20px;color:#a845f0;">-</div>
<div class="t" style="left:44.50px;top:891.00px;font-size:17px;line-height:19px;color:#3b4770;font-weight:700;letter-spacing:-0.073px;"># Contingent</div>
<div class="a" style="left:383px;top:884px;width:208px;height:31px;background:#d8d7ee;"></div>
<div class="a" style="left:388.5px;top:890px;width:197.5px;height:21px;background:#f4f4fb;border-radius:10.5px"></div>
<svg class="a" style="left:383px;top:884px" width="8" height="8"><polygon points="0,0 8,0 0,8" fill="#9d42f5"/></svg>
<div class="t" style="left:549.35px;top:890.10px;font-size:17.6px;line-height:20px;color:#a845f0;letter-spacing:0.392px;">150</div>
<svg class="a" style="left:592px;top:884px" width="8" height="8"><polygon points="0,0 8,0 0,8" fill="#9d42f5"/></svg>
<div class="t" style="left:783.84px;top:890.10px;font-size:17.6px;line-height:20px;color:#a845f0;">-</div>
<div class="a" style="left:801px;top:884px;width:210px;height:31px;background:#d8d7ee;"></div>
<div class="a" style="left:808.5px;top:890px;width:197.5px;height:21px;background:#f4f4fb;border-radius:10.5px"></div>
<svg class="a" style="left:801px;top:884px" width="8" height="8"><polygon points="0,0 8,0 0,8" fill="#9d42f5"/></svg>
<div class="t" style="left:980.86px;top:890.10px;font-size:17.6px;line-height:20px;color:#a845f0;letter-spacing:0.365px;">11</div>
<svg class="a" style="left:1012px;top:884px" width="8" height="8"><polygon points="0,0 8,0 0,8" fill="#9d42f5"/></svg>
<div class="t" style="left:1205.84px;top:890.10px;font-size:17.6px;line-height:20px;color:#a845f0;">-</div>
<div class="a" style="left:1223px;top:884px;width:209px;height:31px;background:#d8d7ee;"></div>
<div class="a" style="left:1229.5px;top:890px;width:197.5px;height:21px;background:#f4f4fb;border-radius:10.5px"></div>
<svg class="a" style="left:1223px;top:884px" width="8" height="8"><polygon points="0,0 8,0 0,8" fill="#9d42f5"/></svg>
<div class="t" style="left:1390.35px;top:890.10px;font-size:17.6px;line-height:20px;color:#a845f0;letter-spacing:0.392px;">161</div>
<div class="a" style="left:1433px;top:884px;width:210px;height:31px;background:#d8d7ee;"></div>
<div class="a" style="left:1440.5px;top:890px;width:197.5px;height:21px;background:#f4f4fb;border-radius:10.5px"></div>
<svg class="a" style="left:1433px;top:884px" width="8" height="8"><polygon points="0,0 8,0 0,8" fill="#9d42f5"/></svg>
<div class="t" style="left:1601.35px;top:890.10px;font-size:17.6px;line-height:20px;color:#a845f0;letter-spacing:0.392px;">400</div>
<div class="a" style="left:1644px;top:884px;width:210px;height:31px;background:#d8d7ee;"></div>
<div class="a" style="left:1651.5px;top:890px;width:197.5px;height:21px;background:#f4f4fb;border-radius:10.5px"></div>
<svg class="a" style="left:1644px;top:884px" width="8" height="8"><polygon points="0,0 8,0 0,8" fill="#9d42f5"/></svg>
<div class="t" style="left:1812.35px;top:890.10px;font-size:17.6px;line-height:20px;color:#a845f0;letter-spacing:0.392px;">300</div>
<svg class="a" style="left:1855px;top:884px" width="8" height="8"><polygon points="0,0 8,0 0,8" fill="#9d42f5"/></svg>
<div class="t" style="left:2047.84px;top:890.10px;font-size:17.6px;line-height:20px;color:#a845f0;">-</div>
<div class="t" style="left:44.50px;top:923.00px;font-size:17px;line-height:19px;color:#3b4770;font-weight:700;letter-spacing:-0.386px;">Reduce Contingents (-)</div>
<div class="t" style="left:574.97px;top:920.60px;font-size:17.2px;line-height:20px;color:#2b3246;">-</div>
<div class="t" style="left:783.97px;top:920.60px;font-size:17.2px;line-height:20px;color:#2b3246;">-</div>
<div class="t" style="left:994.97px;top:920.60px;font-size:17.2px;line-height:20px;color:#2b3246;">-</div>
<div class="t" style="left:1205.97px;top:920.60px;font-size:17.2px;line-height:20px;color:#2b3246;">-</div>
<div class="t" style="left:1415.97px;top:920.60px;font-size:17.2px;line-height:20px;color:#2b3246;">-</div>
<div class="t" style="left:1626.97px;top:920.60px;font-size:17.2px;line-height:20px;color:#2b3246;">-</div>
<div class="t" style="left:1837.97px;top:920.60px;font-size:17.2px;line-height:20px;color:#2b3246;">-</div>
<div class="t" style="left:2047.97px;top:920.60px;font-size:17.2px;line-height:20px;color:#2b3246;">-</div>
<div class="t" style="left:28.00px;top:955.00px;font-size:17px;line-height:19px;color:#3b4770;font-weight:700;letter-spacing:-0.385px;">Total Cost</div>
<div class="t" style="left:505.82px;top:952.60px;font-size:17.2px;line-height:20px;color:#2b3246;letter-spacing:0.383px;">9,105,313</div>
<div class="t" style="left:704.83px;top:952.60px;font-size:17.2px;line-height:20px;color:#2b3246;letter-spacing:0.387px;">12,344,063</div>
<div class="t" style="left:925.82px;top:952.60px;font-size:17.2px;line-height:20px;color:#2b3246;letter-spacing:0.383px;">9,594,888</div>
<div class="t" style="left:1126.83px;top:952.60px;font-size:17.2px;line-height:20px;color:#2b3246;letter-spacing:0.387px;">22,564,729</div>
<div class="t" style="left:1336.83px;top:952.60px;font-size:17.2px;line-height:20px;color:#2b3246;letter-spacing:0.387px;">53,608,992</div>
<div class="t" style="left:1537.84px;top:952.60px;font-size:17.2px;line-height:20px;color:#2b3246;letter-spacing:0.391px;">151,335,918</div>
<div class="t" style="left:1750.17px;top:952.60px;font-size:17.2px;line-height:20px;color:#2b3246;letter-spacing:0.386px;">302,252,118</div>
<div class="t" style="left:1958.84px;top:952.60px;font-size:17.2px;line-height:20px;color:#2b3246;letter-spacing:0.391px;">372,916,518</div>
<div class="t" style="left:44.50px;top:987.00px;font-size:17px;line-height:19px;color:#3b4770;font-weight:700;letter-spacing:-0.156px;">Ramped New HC</div>
<div class="t" style="left:555.84px;top:984.60px;font-size:17.2px;line-height:20px;color:#2b3246;letter-spacing:0.430px;">155</div>
<div class="t" style="left:764.84px;top:984.60px;font-size:17.2px;line-height:20px;color:#2b3246;letter-spacing:0.430px;">560</div>
<div class="t" style="left:985.84px;top:984.60px;font-size:17.2px;line-height:20px;color:#2b3246;letter-spacing:0.430px;">30</div>
<div class="t" style="left:1196.84px;top:984.60px;font-size:17.2px;line-height:20px;color:#2b3246;letter-spacing:0.430px;">31</div>
<div class="t" style="left:1396.84px;top:984.60px;font-size:17.2px;line-height:20px;color:#2b3246;letter-spacing:0.430px;">776</div>
<div class="t" style="left:1607.84px;top:984.60px;font-size:17.2px;line-height:20px;color:#2b3246;letter-spacing:0.430px;">814</div>
<div class="t" style="left:1818.84px;top:984.60px;font-size:17.2px;line-height:20px;color:#2b3246;letter-spacing:0.430px;">625</div>
<div class="t" style="left:2028.84px;top:984.60px;font-size:17.2px;line-height:20px;color:#2b3246;letter-spacing:0.430px;">375</div>
<div class="t" style="left:28.00px;top:1019.00px;font-size:17px;line-height:19px;color:#3b4770;font-weight:700;letter-spacing:-0.320px;">Ending HC</div>
<div class="t" style="left:540.81px;top:1016.60px;font-size:17.2px;line-height:20px;color:#2b3246;letter-spacing:0.387px;">7,966</div>
<div class="t" style="left:749.81px;top:1016.60px;font-size:17.2px;line-height:20px;color:#2b3246;letter-spacing:0.387px;">8,526</div>
<div class="t" style="left:960.81px;top:1016.60px;font-size:17.2px;line-height:20px;color:#2b3246;letter-spacing:0.387px;">8,556</div>
<div class="t" style="left:1171.81px;top:1016.60px;font-size:17.2px;line-height:20px;color:#2b3246;letter-spacing:0.387px;">8,587</div>
<div class="t" style="left:1381.81px;top:1016.60px;font-size:17.2px;line-height:20px;color:#2b3246;letter-spacing:0.387px;">8,587</div>
<div class="t" style="left:1592.81px;top:1016.60px;font-size:17.2px;line-height:20px;color:#2b3246;letter-spacing:0.387px;">9,401</div>
<div class="t" style="left:1793.82px;top:1016.60px;font-size:17.2px;line-height:20px;color:#2b3246;letter-spacing:0.395px;">10,026</div>
<div class="t" style="left:2003.82px;top:1016.60px;font-size:17.2px;line-height:20px;color:#2b3246;letter-spacing:0.395px;">10,401</div>
</div>
<div class="t" style="left:43.00px;top:1050.50px;font-size:18.3px;line-height:21px;color:#1e2846;font-weight:700;letter-spacing:-0.422px;">All Departments</div>
<div class="t" style="left:209.50px;top:1050.50px;font-size:18.3px;line-height:21px;color:#1e2846;font-weight:700;letter-spacing:-0.737px;">US East</div>
<div class="t" style="left:306.50px;top:1050.50px;font-size:18.3px;line-height:21px;color:#1e2846;font-weight:700;letter-spacing:-0.525px;">Strategic WFP Plan</div>
<div class="t" style="left:497.00px;top:1050.50px;font-size:18.3px;line-height:21px;color:#1e2846;font-weight:700;letter-spacing:-0.396px;">New Smart Chip Driver</div>
<div class="card" style="left:2112px;top:613px;width:397px;height:226px"></div>
<div class="t" style="left:2134.00px;top:633.60px;font-size:20px;line-height:22px;color:#3c64e8;font-weight:700;letter-spacing:-0.054px;">Time to Ramp a Contractor</div>
<svg class="a" style="left:2394px;top:636px" width="11" height="17"><path d="M1.500 1 L9 8.500 L1.500 16" fill="none" stroke="#3c64e8" stroke-width="1.800"/></svg>
<div class="t" style="left:2133.50px;top:701.00px;font-size:29.5px;line-height:33px;color:#1e2846;font-weight:700;letter-spacing:-0.948px;">64 months</div>
<div class="t" style="left:2133.00px;top:801.00px;font-size:18.3px;line-height:21px;color:#1e2846;font-weight:700;letter-spacing:-0.422px;">All Departments</div>
<div class="card" style="left:2112px;top:861px;width:397px;height:227.5px"></div>
<div class="t" style="left:2134.00px;top:881.30px;font-size:20px;line-height:22px;color:#3c64e8;font-weight:700;letter-spacing:0.094px;">Time to Ramp New Hire</div>
<svg class="a" style="left:2364.5px;top:884px" width="11" height="17"><path d="M1.500 1 L9 8.500 L1.500 16" fill="none" stroke="#3c64e8" stroke-width="1.800"/></svg>
<div class="t" style="left:2133.00px;top:1050.50px;font-size:18.3px;line-height:21px;color:#1e2846;font-weight:700;letter-spacing:-0.422px;">All Departments</div>
<svg class="a" style="left:2498px;top:740.5px;filter:drop-shadow(0 1px 1.5px rgba(0,0,0,.35))" width="24" height="36" viewBox="0 0 24 36"><g transform="scale(1.1)"><path d="M0 0 L0 24.5 L5.5 19.2 L9.6 28.9 L13.4 27.3 L9.3 17.8 L17 17.8 Z" fill="#000" stroke="#fff" stroke-width="1.6" stroke-linejoin="round"/></g></svg>
<div class="card" style="left:21px;top:1110px;width:1442px;height:304px"></div>
<div class="t" style="left:43.00px;top:1132.00px;font-size:20px;line-height:22px;color:#1e2846;font-weight:700;letter-spacing:-0.166px;">Total Cost to Close Gaps By Scenario</div>
<svg class="a" style="left:0;top:0" width="2560" height="1422"><line x1="253.3" y1="1200" x2="253.3" y2="1316" stroke="#e4e4e5" stroke-width="1.4"/><line x1="319.7" y1="1200" x2="319.7" y2="1316" stroke="#e4e4e5" stroke-width="1.4"/><line x1="386.0" y1="1200" x2="386.0" y2="1316" stroke="#e4e4e5" stroke-width="1.4"/><line x1="452.4" y1="1200" x2="452.4" y2="1316" stroke="#e4e4e5" stroke-width="1.4"/><line x1="518.7" y1="1200" x2="518.7" y2="1316" stroke="#e4e4e5" stroke-width="1.4"/><line x1="585.0" y1="1200" x2="585.0" y2="1316" stroke="#e4e4e5" stroke-width="1.4"/><line x1="651.4" y1="1200" x2="651.4" y2="1316" stroke="#e4e4e5" stroke-width="1.4"/><line x1="717.7" y1="1200" x2="717.7" y2="1316" stroke="#e4e4e5" stroke-width="1.4"/><line x1="784.1" y1="1200" x2="784.1" y2="1316" stroke="#e4e4e5" stroke-width="1.4"/><line x1="850.4" y1="1200" x2="850.4" y2="1316" stroke="#e4e4e5" stroke-width="1.4"/><line x1="916.7" y1="1200" x2="916.7" y2="1316" stroke="#e4e4e5" stroke-width="1.4"/><line x1="983.1" y1="1200" x2="983.1" y2="1316" stroke="#e4e4e5" stroke-width="1.4"/><line x1="1049.4" y1="1200" x2="1049.4" y2="1316" stroke="#e4e4e5" stroke-width="1.4"/><line x1="1115.8" y1="1200" x2="1115.8" y2="1316" stroke="#e4e4e5" stroke-width="1.4"/><line x1="1182.1" y1="1200" x2="1182.1" y2="1316" stroke="#e4e4e5" stroke-width="1.4"/><line x1="1248.4" y1="1200" x2="1248.4" y2="1316" stroke="#e4e4e5" stroke-width="1.4"/><line x1="1314.8" y1="1200" x2="1314.8" y2="1316" stroke="#e4e4e5" stroke-width="1.4"/><line x1="1381.1" y1="1200" x2="1381.1" y2="1316" stroke="#e4e4e5" stroke-width="1.4"/><line x1="1447.5" y1="1200" x2="1447.5" y2="1316" stroke="#e4e4e5" stroke-width="1.4"/><line x1="187.3" y1="1200" x2="187.3" y2="1316" stroke="#ccd6eb" stroke-width="2"/><rect x="188.3" y="1210.25" width="858.8" height="19" fill="#fff"/><rect x="187.8" y="1211.25" width="691.8" height="17" fill="#80d3f6"/><rect x="878.8" y="1211.25" width="119.5" height="17" fill="#3ebdef"/><rect x="998.4" y="1211.25" width="47.0" height="17" fill="#cdd7dd"/><rect x="188.3" y="1248.5" width="1190.8" height="19" fill="#fff"/><rect x="187.8" y="1249.5" width="603.8" height="17" fill="#80d3f6"/><rect x="790.8" y="1249.5" width="290.3" height="17" fill="#3ebdef"/><rect x="1081.1" y="1249.5" width="296.2" height="17" fill="#cdd7dd"/><rect x="188.3" y="1287.25" width="288.8" height="19" fill="#fff"/><rect x="187.8" y="1288.25" width="127.5" height="17" fill="#80d3f6"/><rect x="314.5" y="1288.25" width="158.1" height="17" fill="#3ebdef"/><rect x="472.6" y="1288.25" width="2.8" height="17" fill="#80d3f6"/><circle cx="390.8" cy="1380.3" r="7.9" fill="#80d3f6"/><circle cx="487.2" cy="1380.3" r="7.9" fill="#3ebdef"/><circle cx="610" cy="1380.3" r="7.9" fill="#3ebdef"/><circle cx="727.3" cy="1380.3" r="7.9" fill="#f6a13c"/><circle cx="873" cy="1380.3" r="7.9" fill="#cdd7dd"/><circle cx="1009.6" cy="1380.3" r="7.9" fill="#5c7283"/></svg>
<div class="t" style="left:38.60px;top:1212.30px;font-size:15.2px;line-height:17px;color:#555a66;letter-spacing:-0.203px;">Strategic WFP Plan</div>
<div class="t" style="left:56.48px;top:1250.30px;font-size:15.2px;line-height:17px;color:#555a66;letter-spacing:-0.015px;">Alternate WFP 1</div>
<div class="t" style="left:56.48px;top:1289.00px;font-size:15.2px;line-height:17px;color:#555a66;letter-spacing:-0.015px;">Alternate WFP 2</div>
<div class="t" style="left:497.50px;top:1212.30px;font-size:15px;line-height:17px;color:#111;font-weight:700;letter-spacing:0.730px;text-shadow:-1px -1px 0 #fff,1px -1px 0 #fff,-1px 1px 0 #fff,1px 1px 0 #fff,0 -1.3px 0 #fff,0 1.3px 0 #fff,-1.3px 0 0 #fff,1.3px 0 0 #fff;">1,044,270</div>
<div class="t" style="left:875.50px;top:1212.30px;font-size:15px;line-height:17px;color:#111;font-weight:700;text-shadow:-1px -1px 0 #fff,1px -1px 0 #fff,-1px 1px 0 #fff,1px 1px 0 #fff,0 -1.3px 0 #fff,0 1.3px 0 #fff,-1.3px 0 0 #fff,1.3px 0 0 #fff;">0</div>
<div class="t" style="left:908.80px;top:1212.30px;font-size:15px;line-height:17px;color:#111;font-weight:700;letter-spacing:0.926px;text-shadow:-1px -1px 0 #fff,1px -1px 0 #fff,-1px 1px 0 #fff,1px 1px 0 #fff,0 -1.3px 0 #fff,0 1.3px 0 #fff,-1.3px 0 0 #fff,1.3px 0 0 #fff;">180,435</div>
<div class="t" style="left:996.70px;top:1212.30px;font-size:15px;line-height:17px;color:#111;font-weight:700;letter-spacing:0.837px;text-shadow:-1px -1px 0 #fff,1px -1px 0 #fff,-1px 1px 0 #fff,1px 1px 0 #fff,0 -1.3px 0 #fff,0 1.3px 0 #fff,-1.3px 0 0 #fff,1.3px 0 0 #fff;">70,908</div>
<div class="t" style="left:459.25px;top:1250.30px;font-size:15px;line-height:17px;color:#111;font-weight:700;letter-spacing:1.051px;text-shadow:-1px -1px 0 #fff,1px -1px 0 #fff,-1px 1px 0 #fff,1px 1px 0 #fff,0 -1.3px 0 #fff,0 1.3px 0 #fff,-1.3px 0 0 #fff,1.3px 0 0 #fff;">911,418</div>
<div class="t" style="left:787.20px;top:1250.30px;font-size:15px;line-height:17px;color:#111;font-weight:700;text-shadow:-1px -1px 0 #fff,1px -1px 0 #fff,-1px 1px 0 #fff,1px 1px 0 #fff,0 -1.3px 0 #fff,0 1.3px 0 #fff,-1.3px 0 0 #fff,1.3px 0 0 #fff;">0</div>
<div class="t" style="left:906.00px;top:1250.30px;font-size:15px;line-height:17px;color:#111;font-weight:700;letter-spacing:0.911px;text-shadow:-1px -1px 0 #fff,1px -1px 0 #fff,-1px 1px 0 #fff,1px 1px 0 #fff,0 -1.3px 0 #fff,0 1.3px 0 #fff,-1.3px 0 0 #fff,1.3px 0 0 #fff;">438,149</div>
<div class="t" style="left:1077.00px;top:1250.30px;font-size:15px;line-height:17px;color:#111;font-weight:700;text-shadow:-1px -1px 0 #fff,1px -1px 0 #fff,-1px 1px 0 #fff,1px 1px 0 #fff,0 -1.3px 0 #fff,0 1.3px 0 #fff,-1.3px 0 0 #fff,1.3px 0 0 #fff;">0</div>
<div class="t" style="left:1199.60px;top:1250.30px;font-size:15px;line-height:17px;color:#111;font-weight:700;letter-spacing:0.768px;text-shadow:-1px -1px 0 #fff,1px -1px 0 #fff,-1px 1px 0 #fff,1px 1px 0 #fff,0 -1.3px 0 #fff,0 1.3px 0 #fff,-1.3px 0 0 #fff,1.3px 0 0 #fff;">447,154</div>
<div class="t" style="left:1374.00px;top:1250.30px;font-size:15px;line-height:17px;color:#111;font-weight:700;text-shadow:-1px -1px 0 #fff,1px -1px 0 #fff,-1px 1px 0 #fff,1px 1px 0 #fff,0 -1.3px 0 #fff,0 1.3px 0 #fff,-1.3px 0 0 #fff,1.3px 0 0 #fff;">0</div>
<div class="t" style="left:222.00px;top:1289.00px;font-size:15px;line-height:17px;color:#111;font-weight:700;letter-spacing:0.897px;text-shadow:-1px -1px 0 #fff,1px -1px 0 #fff,-1px 1px 0 #fff,1px 1px 0 #fff,0 -1.3px 0 #fff,0 1.3px 0 #fff,-1.3px 0 0 #fff,1.3px 0 0 #fff;">192,455</div>
<div class="t" style="left:311.00px;top:1289.00px;font-size:15px;line-height:17px;color:#111;font-weight:700;text-shadow:-1px -1px 0 #fff,1px -1px 0 #fff,-1px 1px 0 #fff,1px 1px 0 #fff,0 -1.3px 0 #fff,0 1.3px 0 #fff,-1.3px 0 0 #fff,1.3px 0 0 #fff;">0</div>
<div class="t" style="left:363.00px;top:1289.00px;font-size:15px;line-height:17px;color:#111;font-weight:700;letter-spacing:1.004px;text-shadow:-1px -1px 0 #fff,1px -1px 0 #fff,-1px 1px 0 #fff,1px 1px 0 #fff,0 -1.3px 0 #fff,0 1.3px 0 #fff,-1.3px 0 0 #fff,1.3px 0 0 #fff;">238,590</div>
<div class="t" style="left:453.75px;top:1289.00px;font-size:15px;line-height:17px;color:#111;font-weight:700;letter-spacing:0.743px;text-shadow:-1px -1px 0 #fff,1px -1px 0 #fff,-1px 1px 0 #fff,1px 1px 0 #fff,0 -1.3px 0 #fff,0 1.3px 0 #fff,-1.3px 0 0 #fff,1.3px 0 0 #fff;">4,200</div>
<div class="t" style="left:183.94px;top:1327.50px;font-size:12.8px;line-height:15px;color:#4b4f7c;font-weight:700;">0</div>
<div class="t" style="left:238.46px;top:1327.50px;font-size:12.8px;line-height:15px;color:#4b4f7c;font-weight:700;letter-spacing:0.050px;">100K</div>
<div class="t" style="left:304.80px;top:1327.50px;font-size:12.8px;line-height:15px;color:#4b4f7c;font-weight:700;letter-spacing:0.050px;">200K</div>
<div class="t" style="left:371.14px;top:1327.50px;font-size:12.8px;line-height:15px;color:#4b4f7c;font-weight:700;letter-spacing:0.050px;">300K</div>
<div class="t" style="left:437.48px;top:1327.50px;font-size:12.8px;line-height:15px;color:#4b4f7c;font-weight:700;letter-spacing:0.050px;">400K</div>
<div class="t" style="left:503.82px;top:1327.50px;font-size:12.8px;line-height:15px;color:#4b4f7c;font-weight:700;letter-spacing:0.050px;">500K</div>
<div class="t" style="left:570.16px;top:1327.50px;font-size:12.8px;line-height:15px;color:#4b4f7c;font-weight:700;letter-spacing:0.050px;">600K</div>
<div class="t" style="left:636.50px;top:1327.50px;font-size:12.8px;line-height:15px;color:#4b4f7c;font-weight:700;letter-spacing:0.050px;">700K</div>
<div class="t" style="left:702.84px;top:1327.50px;font-size:12.8px;line-height:15px;color:#4b4f7c;font-weight:700;letter-spacing:0.050px;">800K</div>
<div class="t" style="left:769.18px;top:1327.50px;font-size:12.8px;line-height:15px;color:#4b4f7c;font-weight:700;letter-spacing:0.050px;">900K</div>
<div class="t" style="left:829.34px;top:1327.50px;font-size:12.8px;line-height:15px;color:#4b4f7c;font-weight:700;letter-spacing:0.371px;">1 000K</div>
<div class="t" style="left:895.68px;top:1327.50px;font-size:12.8px;line-height:15px;color:#4b4f7c;font-weight:700;letter-spacing:0.371px;">1 100K</div>
<div class="t" style="left:962.02px;top:1327.50px;font-size:12.8px;line-height:15px;color:#4b4f7c;font-weight:700;letter-spacing:0.371px;">1 200K</div>
<div class="t" style="left:1028.36px;top:1327.50px;font-size:12.8px;line-height:15px;color:#4b4f7c;font-weight:700;letter-spacing:0.371px;">1 300K</div>
<div class="t" style="left:1094.70px;top:1327.50px;font-size:12.8px;line-height:15px;color:#4b4f7c;font-weight:700;letter-spacing:0.371px;">1 400K</div>
<div class="t" style="left:1161.04px;top:1327.50px;font-size:12.8px;line-height:15px;color:#4b4f7c;font-weight:700;letter-spacing:0.371px;">1 500K</div>
<div class="t" style="left:1227.38px;top:1327.50px;font-size:12.8px;line-height:15px;color:#4b4f7c;font-weight:700;letter-spacing:0.371px;">1 600K</div>
<div class="t" style="left:1293.72px;top:1327.50px;font-size:12.8px;line-height:15px;color:#4b4f7c;font-weight:700;letter-spacing:0.371px;">1 700K</div>
<div class="t" style="left:1360.06px;top:1327.50px;font-size:12.8px;line-height:15px;color:#4b4f7c;font-weight:700;letter-spacing:0.371px;">1 800K</div>
<div class="t" style="left:1415.48px;top:1327.50px;font-size:12.8px;line-height:15px;color:#4b4f7c;font-weight:700;letter-spacing:-0.023px;">1 9…</div>
<div class="t" style="left:408.20px;top:1371.30px;font-size:16.2px;line-height:18px;color:#222;font-weight:700;letter-spacing:-0.247px;">Sales</div>
<div class="t" style="left:504.80px;top:1371.30px;font-size:16.2px;line-height:18px;color:#222;font-weight:700;letter-spacing:-0.032px;">Services</div>
<div class="t" style="left:627.30px;top:1371.30px;font-size:16.2px;line-height:18px;color:#222;font-weight:700;letter-spacing:0.171px;">Product</div>
<div class="t" style="left:745.20px;top:1371.30px;font-size:16.2px;line-height:18px;color:#222;font-weight:700;letter-spacing:0.408px;">Operations</div>
<div class="t" style="left:890.90px;top:1371.30px;font-size:16.2px;line-height:18px;color:#222;font-weight:700;letter-spacing:0.455px;">Corporate</div>
<div class="t" style="left:1028.00px;top:1371.30px;font-size:16.2px;line-height:18px;color:#222;font-weight:700;letter-spacing:0.128px;">Executive</div>
<div class="card" style="left:1485px;top:1110px;width:606px;height:304px;border-radius:0 0 4.5px 4.5px"></div>
<div class="t" style="left:1506.00px;top:1121.00px;font-size:18.3px;line-height:21px;color:#1e2846;font-weight:700;letter-spacing:-0.315px;">HR Initiatives Needed</div>
<div class="a" style="left:1505px;top:1153px;width:565px;height:105px;background:#fff;border:1.4px solid #6b7aa8;border-radius:4px"></div>
<div class="card" style="left:2112px;top:1110px;width:397px;height:304px"></div>
<div class="t" style="left:2133.00px;top:1131.60px;font-size:20px;line-height:22px;color:#1e2846;font-weight:700;letter-spacing:-0.106px;">Select Scenario For Plan</div>
<div class="t" style="left:2133.00px;top:1187.00px;font-size:18.3px;line-height:21px;color:#1e2846;font-weight:700;letter-spacing:-0.575px;">Scenario</div>
<div class="a" style="left:2132px;top:1219px;width:356.5px;height:54px;background:#fff;border:1.6px solid #55649c;border-radius:4px"></div>
<div class="t" style="left:2156.40px;top:1236.00px;font-size:17px;line-height:19px;color:#a845f0;letter-spacing:-0.223px;">Strategic WFP Plan</div>
<svg class="a" style="left:2421px;top:1238px" width="15" height="15"><path d="M1.300 1.300 L13.700 13.700 M13.700 1.300 L1.300 13.700" stroke="#1e2846" stroke-width="2.400" fill="none"/></svg>
<svg class="a" style="left:2452px;top:1240px" width="17" height="11"><path d="M1 1.500 L8.500 9 L16 1.500" stroke="#1e2846" stroke-width="1.900" fill="none"/></svg>
</div></body></html>
